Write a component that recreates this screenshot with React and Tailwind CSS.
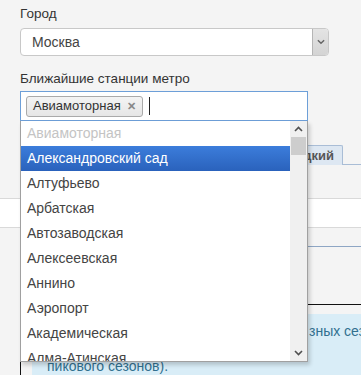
import React from 'react';

const stations = [
    'Авиамоторная',
    'Александровский сад',
    'Алтуфьево',
    'Арбатская',
    'Автозаводская',
    'Алексеевская',
    'Аннино',
    'Аэропорт',
    'Академическая',
    'Алма-Атинская',
];

const Chevron = ({ up, className }) => (
    <svg width="9" height="6" viewBox="0 0 9 6" className={className}>
        <path
            d={up ? 'M1 5 L4.5 1.5 L8 5' : 'M1 1 L4.5 4.5 L8 1'}
            fill="none"
            stroke="currentColor"
            strokeWidth="1.6"
        />
    </svg>
);

const App = () => {
    return (
        <div
            className="relative w-[361px] h-[375px] overflow-hidden bg-[#f4f4f4] text-[13px] text-[#333]"
            style={{ fontFamily: '"Liberation Sans", Arial, sans-serif' }}
        >
            <div className="pt-[6px] pl-[20px]">
                <div className="h-[15px] leading-[15px] text-[13.5px]">Город</div>

                <div className="mt-[7px] w-[309px] h-[28px] flex bg-white border border-[#c8c8c8] rounded-[4px] overflow-hidden">
                    <div className="flex-1 pl-[11px] leading-[26px] text-[14px] text-[#444]">Москва</div>
                    <div className="w-[16px] flex items-center justify-center bg-gradient-to-b from-[#e4e4e4] to-[#d4d4d4] border-l border-[#b5b5b5] text-[#666]">
                        <Chevron className="w-[8px]" />
                    </div>
                </div>

                <div className="mt-[15px] h-[15px] leading-[15px] text-[13.5px]">Ближайшие станции метро</div>

                <div className="mt-[5px] w-[288px] h-[30px] flex items-center bg-white border border-[#6d9fd8] pl-[5px]">
                    <div className="h-[21px] flex items-center gap-[6px] pl-[6px] pr-[6px] bg-gradient-to-b from-[#f4f4f4] to-[#e6e6e6] border border-[#aaa] rounded-[3px]">
                        <span>Авиамоторная</span>
                        <span className="text-[#888] text-[11px] font-bold">✕</span>
                    </div>
                    <div className="ml-[6px] w-px h-[18px] bg-[#222]" />
                </div>

                {/* background content under the dropdown */}
                <div className="mt-[24px] h-[20px] flex justify-end border-b border-[#a9bdd6]">
                    <div className="mr-[18px] px-[8px] h-[20px] leading-[20px] font-bold text-[#555] bg-[#dde7f2] border border-b-0 border-[#a9bdd6] rounded-t-[2px]">
                        Гладкий
                    </div>
                </div>
                <div className="h-[33px]" />
                <div className="-ml-[20px] pl-[20px] h-[30px] bg-white border-y border-[#d9d9d9]" />
                <div className="h-[18px]" />
                <div className="h-px bg-[#8ea6c4]" />
                <div className="h-[57px]" />
                <div className="flex border-t border-l border-[#111] pt-[9px]">
                    <div className="ml-[11px] flex-1 bg-[#d9edf7] text-[#31708f] text-[14px] pt-[7px] h-[80px] whitespace-nowrap overflow-hidden">
                        <div className="h-[20px] leading-[20px] flex">
                            <span className="shrink-0 w-[277px] overflow-hidden pl-[15px]">Цены указаны с учётом ра</span>
                            <span className="shrink-0">зных сезонов (низкого, среднего и</span>
                        </div>
                        <div className="mt-[15px] pl-[15px] h-[20px] leading-[20px]">пикового сезонов).</div>
                    </div>
                </div>
            </div>

            {/* dropdown list */}
            <div className="absolute left-[20px] top-[121px] w-[288px] h-[241px] flex bg-white border border-t-0 border-[#a0a0a0] shadow-[2px_3px_4px_rgba(0,0,0,0.18)]">
                <div className="flex-1 overflow-hidden">
                    {stations.map((name, i) => (
                        <div
                            key={name}
                            className={
                                i === 0
                                    ? 'h-[25px] leading-[25px] pl-[6px] text-[14px] text-[#c4c4c4]'
                                    : i === 1
                                    ? 'h-[25px] leading-[25px] pl-[6px] text-[14px] text-white bg-gradient-to-b from-[#3c7ddb] to-[#2a62bc]'
                                    : 'h-[25px] leading-[25px] pl-[6px] text-[14px] text-[#444]'
                            }
                        >
                            {name}
                        </div>
                    ))}
                </div>
                <div className="w-[17px] flex flex-col items-center bg-[#f0f0f0]">
                    <div className="h-[16px] flex items-center justify-center text-[#505050]">
                        <Chevron up />
                    </div>
                    <div className="w-[15px] h-[18px] bg-[#cdcdcd]" />
                    <div className="flex-1" />
                    <div className="h-[16px] flex items-center justify-center text-[#505050]">
                        <Chevron />
                    </div>
                </div>
            </div>
        </div>
    );
};

export default App;
